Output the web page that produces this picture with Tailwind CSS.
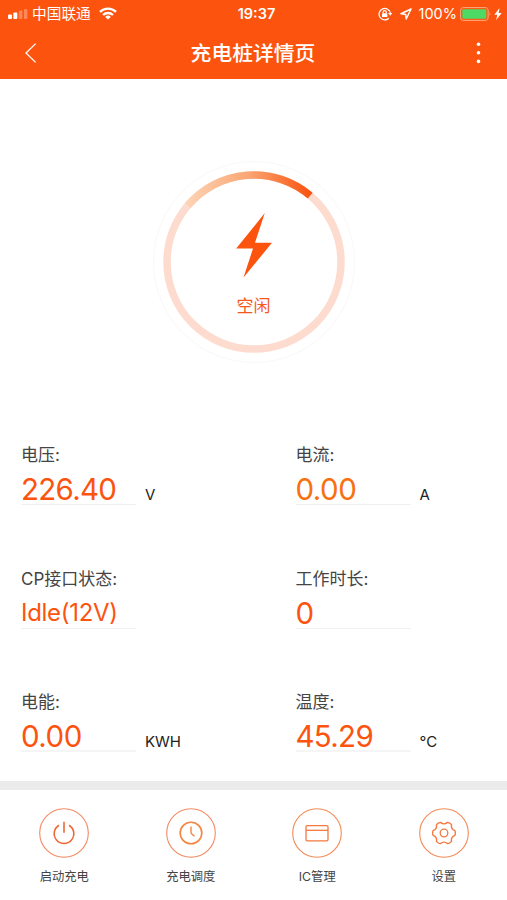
<!DOCTYPE html>
<html lang="zh-CN">
<head>
  <meta charset="UTF-8" />
  <meta name="viewport" content="width=device-width, initial-scale=1.0" />
  <title>充电桩详情页</title>
  <script src="https://cdn.jsdelivr.net/npm/@tailwindcss/browser@4"></script>
</head>
<body class="bg-white font-['Inter','Noto_Sans_CJK_SC',sans-serif] h-screen flex flex-col overflow-hidden">

  <header class="h-[79px] shrink-0 bg-[#fc540f] text-white">
    <!-- status bar -->
    <div class="h-[27px] grid grid-cols-[1fr_auto_1fr] items-center pt-px pl-2 pr-[5px]">
      <div class="flex items-center">
        <svg class="w-5 h-[10px]" viewBox="0 0 20 10" fill="#fff">
          <rect x="0" y="5.5" width="4" height="4.5" rx="1" />
          <rect x="5.3" y="3.5" width="4" height="6.5" rx="1" />
          <rect x="10.8" y="1.5" width="3.6" height="8.5" rx="1" opacity=".3" />
          <rect x="16" y="0" width="3.4" height="10" rx="1" opacity=".3" />
        </svg>
        <span class="ml-1 text-[14.7px] leading-none">中国联通</span>
        <svg class="ml-2 w-[18px] h-[13px]" viewBox="0 0 18 13" fill="none" stroke="#fff" stroke-width="2.3">
          <path d="M1 4.8a11.5 11.5 0 0 1 16 0" />
          <path d="M4 8a7.3 7.3 0 0 1 10 0" />
          <path d="M9 12.6 6.2 9.9a4 4 0 0 1 5.6 0z" fill="#fff" stroke="none" />
        </svg>
      </div>
      <span class="pt-px pl-[3px] text-[14.5px] font-semibold leading-none">19:37</span>
      <div class="flex items-center justify-end">
        <svg class="w-[14px] h-[14px]" viewBox="0 0 14 14" fill="none" stroke="#fff" stroke-width="1.2">
          <path d="M10.8 11.2A5.7 5.7 0 1 1 12.4 6.2" />
          <path d="M10.2 6h4l-2 2.8z" fill="#fff" stroke="none" />
          <rect x="4" y="6.2" width="5.4" height="3.9" rx=".6" fill="#fff" stroke="none" />
          <path d="M5.1 6.3V5.2a1.6 1.6 0 0 1 3.2 0v1.1" />
        </svg>
        <svg class="ml-2 w-[12px] h-[12px]" viewBox="0 0 12 12" fill="none" stroke="#fff" stroke-width="1.5" stroke-linejoin="round">
          <path d="M11 1 1 5.7l4.7.7.5 4.6z" />
        </svg>
        <span class="ml-[7px] pt-px text-[14.5px] leading-none">100%</span>
        <svg class="ml-[3px] w-[32px] h-[14px]" viewBox="0 0 32 14" fill="none">
          <rect x=".6" y=".6" width="27.5" height="12.8" rx="2.6" stroke="#ffa982" stroke-width="1" />
          <rect x="2.3" y="2.2" width="24" height="9.6" rx="1" fill="#4cd964" />
          <path d="M29.6 4.7q1.8 2.3 0 4.6z" fill="#ffa982" />
        </svg>
        <svg class="ml-[2px] w-[8px] h-[12px]" viewBox="0 0 8 12" fill="#fff">
          <path d="M5.6 0 .3 6.8h3L2.2 12l5.5-7H4.6z" />
        </svg>
      </div>
    </div>
    <!-- title bar -->
    <div class="h-[52px] grid grid-cols-[1fr_auto_1fr] items-center pl-[25px] pr-[26px]">
      <svg class="w-[12px] h-[20px]" viewBox="0 0 12 20" fill="none" stroke="#fff" stroke-width="1.3">
        <path d="M10.6.6 1 10l9.6 9.4" />
      </svg>
      <h1 class="pt-[2px] text-[20.8px] leading-none font-medium">充电桩详情页</h1>
      <svg class="justify-self-end w-[5px] h-[22px]" viewBox="0 0 5 22" fill="#fff">
        <circle cx="2.5" cy="2.2" r="1.8" />
        <circle cx="2.5" cy="10.8" r="1.8" />
        <circle cx="2.5" cy="19.4" r="1.8" />
      </svg>
    </div>
  </header>

  <!-- charger state -->
  <section class="h-[364px] shrink-0 flex justify-center pt-[80px]">
    <div class="relative w-[206px] h-[206px]">
      <svg class="w-full h-full" viewBox="0 0 206 206" fill="none">
        <defs>
          <linearGradient id="arc" gradientUnits="userSpaceOnUse" x1="37" y1="40" x2="160" y2="34">
            <stop offset="0" stop-color="#fdd3b4" />
            <stop offset=".5" stop-color="#faa673" />
            <stop offset="1" stop-color="#f9520f" />
          </linearGradient>
        </defs>
        <circle cx="103" cy="103" r="100.5" stroke="#faf8f7" />
        <circle cx="103" cy="103" r="87" stroke="#fddccf" stroke-width="7.5" />
        <path d="M36.8 46.5A87 87 0 0 1 159.2 36.6" stroke="url(#arc)" stroke-width="7.5" />
        <path d="M113.8 54 85.2 89.5H102L92.5 118.5 121 83.8H104z" fill="#fc540f" />
      </svg>
      <span class="absolute inset-x-0 top-[139px] text-center text-[17px] leading-[17px] text-[#f4581c]">空闲</span>
    </div>
  </section>

  <!-- readings -->
  <section class="h-[338px] shrink-0 grid grid-cols-[274.5px_1fr] auto-rows-[123.5px] pl-[21px] text-[#fc540f]">
    <div>
      <p class="text-[17px] leading-[24px] text-[#444]">电压:</p>
      <div class="flex">
        <p class="w-[115px] h-[38px] border-b border-[#f0f0f0] text-[29.5px] leading-[44px] tracking-[-0.7px]">226.40</p>
        <span class="ml-[9px] mt-[16px] text-[15px] leading-6 text-[#222]">V</span>
      </div>
    </div>
    <div>
      <p class="text-[17px] leading-[24px] text-[#444]">电流:</p>
      <div class="flex">
        <p class="w-[115px] h-[38px] border-b border-[#f0f0f0] text-[29.5px] leading-[44px] tracking-[-0.5px] text-[#f9700f]">0.00</p>
        <span class="ml-[9px] mt-[16px] text-[15px] leading-6 text-[#222]">A</span>
      </div>
    </div>
    <div>
      <p class="text-[17px] leading-[24px] text-[#444]">CP接口状态:</p>
      <p class="w-[115px] h-[38px] border-b border-[#f0f0f0] text-[24px] leading-[43px] tracking-[-0.3px]">Idle(12V)</p>
    </div>
    <div>
      <p class="text-[17px] leading-[24px] text-[#444]">工作时长:</p>
      <p class="w-[115px] h-[38px] border-b border-[#f0f0f0] text-[29.5px] leading-[44px] tracking-[-0.5px]">0</p>
    </div>
    <div>
      <p class="text-[17px] leading-[24px] text-[#444]">电能:</p>
      <div class="flex">
        <p class="w-[115px] h-[38px] border-b-2 border-[#f5f5f5] text-[29.5px] leading-[44px] tracking-[-0.5px]">0.00</p>
        <span class="ml-[9px] mt-[16px] text-[15px] leading-6 text-[#222]">KWH</span>
      </div>
    </div>
    <div>
      <p class="text-[17px] leading-[24px] text-[#444]">温度:</p>
      <div class="flex">
        <p class="w-[115px] h-[38px] border-b-2 border-[#f5f5f5] text-[29.5px] leading-[44px] tracking-[-0.7px]">45.29</p>
        <span class="ml-[9px] mt-[16px] text-[15px] leading-6 text-[#222]">°C</span>
      </div>
    </div>
  </section>

  <div class="h-[9px] shrink-0 bg-[#ebebeb]"></div>

  <!-- bottom actions -->
  <nav class="grow grid grid-cols-4 pt-[18px] pl-px text-[12.3px] leading-[18px] text-[#444]">
    <a class="flex flex-col items-center gap-[10px]">
      <svg class="w-[50px] h-[50px]" viewBox="0 0 50 50" fill="none" stroke="#ef6a38">
        <circle cx="25" cy="25" r="24.3" stroke="#f58a62" stroke-width="1.1" />
        <path d="M20 17.2a9.8 9.8 0 1 0 10 0M25 13.8v11" stroke-width="1.6" />
      </svg>
      启动充电
    </a>
    <a class="flex flex-col items-center gap-[10px]">
      <svg class="w-[50px] h-[50px]" viewBox="0 0 50 50" fill="none" stroke="#f58440">
        <circle cx="25" cy="25" r="24.3" stroke="#f58a62" stroke-width="1.1" />
        <circle cx="25" cy="25" r="10.8" stroke-width="1.6" />
        <path d="M25 18.5v6q0 1.2 3.5 3.6" stroke-width="1.4" />
      </svg>
      充电调度
    </a>
    <a class="flex flex-col items-center gap-[10px]">
      <svg class="w-[50px] h-[50px]" viewBox="0 0 50 50" fill="none" stroke="#f4793f">
        <circle cx="25" cy="25" r="24.3" stroke="#f58a56" stroke-width="1.1" />
        <rect x="14" y="17.6" width="22" height="15.2" rx="1.3" stroke-width="1.3" />
        <path d="M14 22.3h22" stroke-width="1.3" />
      </svg>
      IC管理
    </a>
    <a class="flex flex-col items-center gap-[10px]">
      <svg class="w-[50px] h-[50px]" viewBox="0 0 50 50" fill="none" stroke="#f4793f">
        <circle cx="25" cy="25" r="24.3" stroke="#f58a56" stroke-width="1.1" />
        <path d="M21.5 14.4Q25 17.3 28.5 14.4Q31 14.7 32.5 16.7Q31.7 21.2 36 22.7Q36.9 25 36 27.3Q31.7 28.8 32.5 33.3Q31 35.3 28.5 35.6Q25 32.7 21.5 35.6Q19 35.3 17.5 33.3Q18.3 28.8 14 27.3Q13.1 25 14 22.7Q18.3 21.2 17.5 16.7Q19 14.7 21.5 14.4z" stroke-width="1.4" stroke-linejoin="round" />
        <circle cx="25" cy="25" r="3.8" stroke-width="1.3" />
      </svg>
      设置
    </a>
  </nav>
</body>
</html>
